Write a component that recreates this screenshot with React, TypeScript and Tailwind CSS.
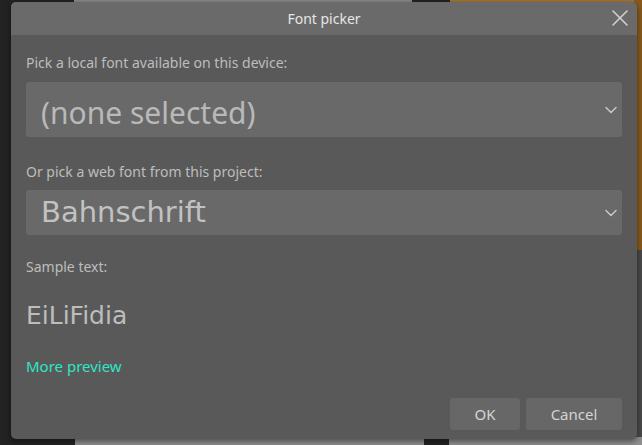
import { ChevronDown, X } from 'lucide-react';

const ui = { fontFamily: '"Segoe UI", "Noto Sans", "Open Sans", sans-serif' };
const din = { fontFamily: '"Bahnschrift", "DejaVu Sans", sans-serif' };

export default function App() {
  return (
    <div className="relative h-[445px] w-[642px] overflow-hidden bg-[#232323]" style={ui}>
      {/* backdrop of the page behind the dialog */}
      <div className="absolute left-[74px] top-0 h-[8px] w-[338px] bg-[#8a8a8a]" />
      <div className="absolute left-[450px] top-0 h-[8px] w-[192px] bg-[#a27638]" />
      <div className="absolute right-0 top-0 h-[250px] w-[8px] bg-[#8a5a1c]" />
      <div className="absolute right-0 top-[250px] h-[195px] w-[8px] bg-[#4a4a4a]" />
      <div className="absolute bottom-0 left-[75px] h-[8px] w-[349px] bg-[#8f8f8f]" />
      <div className="absolute bottom-0 left-[449px] h-[8px] w-[193px] bg-[#8f8f8f]" />

      {/* dialog */}
      <div className="absolute left-[11px] top-[2px] flex h-[437px] w-[626px] flex-col overflow-hidden rounded-[5px] bg-[#595959] shadow-[0_2px_6px_rgba(0,0,0,0.5)]">
        <div className="relative flex h-[33px] items-center justify-center bg-[#6a6a6a]">
          <span className="text-[14px] text-[#e6e6e6]">Font picker</span>
          <X className="absolute right-[3px] top-[2px] h-[28px] w-[28px] text-[#d0d0d0]" strokeWidth={1.3} />
        </div>

        <div className="flex flex-1 flex-col px-[15px]">
          <label className="mt-[18px] text-[14px] leading-[20px] text-[#bdbdbd]">
            Pick a local font available on this device:
          </label>
          <div className="mt-[9px] flex h-[55px] items-center rounded-[3px] bg-[#696969] pl-[15px] pr-[1px]">
            <span className="flex-1 pt-[5px] text-[30px] text-[#b9b9b9]">(none selected)</span>
            <ChevronDown className="h-[20px] w-[20px] text-[#c8c8c8]" strokeWidth={1.8} />
          </div>

          <label className="mt-[25px] text-[14px] leading-[20px] text-[#bdbdbd]">
            Or pick a web font from this project:
          </label>
          <div className="mt-[8px] flex h-[45px] items-center rounded-[3px] bg-[#696969] pl-[15px] pr-[1px]">
            <span className="flex-1 text-[29px] text-[#c2c2c2]" style={din}>
              Bahnschrift
            </span>
            <ChevronDown className="h-[20px] w-[20px] text-[#c8c8c8]" strokeWidth={1.8} />
          </div>

          <label className="mt-[22px] text-[14px] leading-[20px] text-[#bdbdbd]">Sample text:</label>
          <div className="mt-[24px] text-[25px] leading-[30px] text-[#bdbdbd]" style={din}>
            EiLiFidia
          </div>

          <a className="mt-[25px] w-fit text-[15px] leading-[20px] text-[#2ee6c4]">More preview</a>

          <div className="mt-auto mb-[9px] flex justify-end gap-[6px]">
            <button className="h-[32px] w-[70px] rounded-[3px] bg-[#676767] text-[15px] text-[#d4d4d4]">OK</button>
            <button className="h-[32px] w-[96px] rounded-[3px] bg-[#676767] text-[15px] text-[#d4d4d4]">Cancel</button>
          </div>
        </div>
      </div>
    </div>
  );
}
